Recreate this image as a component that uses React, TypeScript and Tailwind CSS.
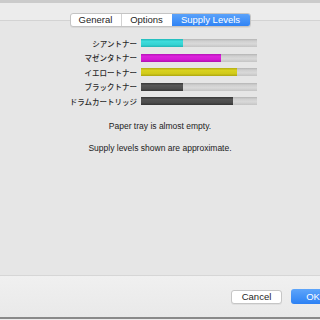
import React from "react";

const supplies = [
  { label: "シアントナー", fill: "w-[42px] bg-[linear-gradient(#1fb9b9,#3fdcdc_30%,#35d3d3_70%,#22b5b5)]" },
  { label: "マゼンタトナー", fill: "w-[80px] bg-[linear-gradient(#b514b5,#dc22dc_30%,#d31ad3_70%,#b010b0)]" },
  { label: "イエロートナー", fill: "w-[96px] bg-[linear-gradient(#b3ad12,#d9d21f_30%,#d1ca1a_70%,#aca610)]" },
  { label: "ブラックトナー", fill: "w-[42px] bg-[linear-gradient(#3a3a3a,#585858_30%,#4f4f4f_70%,#383838)]" },
  { label: "ドラムカートリッジ", fill: "w-[92px] bg-[linear-gradient(#363636,#535353_30%,#4b4b4b_70%,#343434)]" },
];

const SupplyRow = ({ label, fill }: { label: string; fill: string }) => (
  <div className="flex items-center h-[14.5px]">
    <div className="w-[137px] text-right text-[7.5px] leading-none font-medium text-[#2a2a2a] font-['Noto_Sans_CJK_JP',sans-serif]">
      {label}
    </div>
    <div className="ml-[4px] w-[116px] h-[8px] flex bg-[linear-gradient(#b4b4b4,#cfcfcf_25%,#d9d9d9_60%,#c4c4c4)]">
      <div className={`h-full ${fill}`} />
    </div>
  </div>
);

const App = () => {
  return (
    <div className="w-[320px] h-[320px] overflow-hidden flex flex-col bg-[#ececec] font-['Liberation_Sans',Arial,sans-serif]">
      <div className="h-[3px] bg-[#cbcbcb]" />
      <div className="mt-[17px] h-[255px] bg-[#e6e6e6] border-t border-[#d3d3d3] flex flex-col">
        <div className="-mt-[8px] flex justify-center">
          <div className="flex h-[14px] rounded-[3px] border border-[#c4c4c4] bg-white shadow-[0_1px_0_rgba(0,0,0,0.06)] text-[9.5px] leading-none text-[#1e1e1e] overflow-hidden">
            <div className="w-[51px] flex items-center justify-center border-r border-[#d2d2d2]">General</div>
            <div className="w-[50px] flex items-center justify-center">Options</div>
            <div className="w-[78px] flex items-center justify-center text-white bg-[linear-gradient(#5aa2fa,#2f83f5)]">
              Supply Levels
            </div>
          </div>
        </div>
        <div className="mt-[9px] flex flex-col">
          {supplies.map((s) => (
            <SupplyRow key={s.label} label={s.label} fill={s.fill} />
          ))}
        </div>
        <div className="mt-[11px] text-center text-[8.5px] leading-[12px] text-[#222]">Paper tray is almost empty.</div>
        <div className="mt-[10px] text-center text-[8.5px] leading-[12px] text-[#222]">Supply levels shown are approximate.</div>
      </div>
      <div className="h-[42px] border-t border-[#d6d6d6] bg-[linear-gradient(#f0f0f0,#e9e9e9)] flex items-center pl-[231px] gap-[9px] text-[9.5px] leading-none">
        <div className="w-[51px] h-[14px] shrink-0 flex items-center justify-center bg-white border border-[#c6c6c6] rounded-[3px] text-[#1e1e1e] shadow-[0_1px_0_rgba(0,0,0,0.05)]">
          Cancel
        </div>
        <div className="w-[44px] h-[15px] shrink-0 flex items-center justify-center rounded-[3px] text-white bg-[linear-gradient(#5ea5fa,#2c81f4)]">
          OK
        </div>
      </div>
      <div className="h-[2px] bg-[#8a8a8a]" />
    </div>
  );
};

export default App;
